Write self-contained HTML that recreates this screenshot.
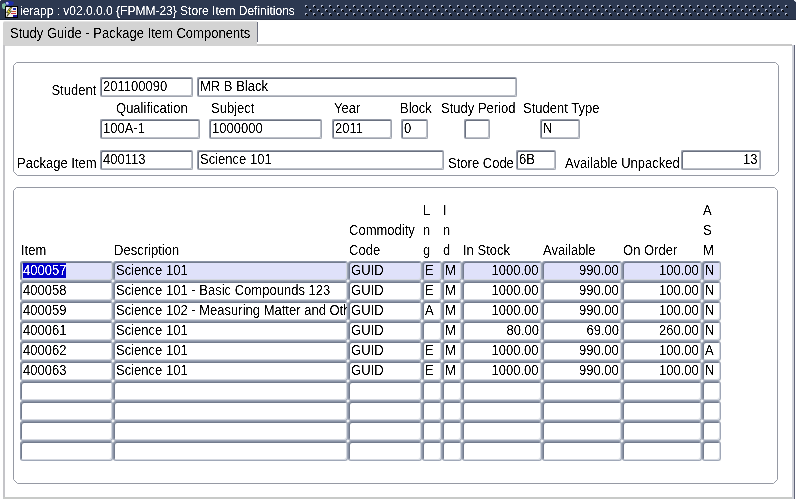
<!DOCTYPE html><html><head><meta charset="utf-8"><style>
*{margin:0;padding:0;box-sizing:border-box}
html,body{width:796px;height:499px;overflow:hidden;background:#fff;font-family:"Liberation Sans", sans-serif}
.t{position:absolute;white-space:pre;line-height:15px;font-size:13px;color:#000;filter:url(#crisp)}
.f{position:absolute;border:1px solid;border-color:#959ba8 #9ea3ae #9ea3ae #959ba8;box-shadow:inset 1px 1px 0 #6a7180,inset -1px -1px 0 #bcc0c8;border-radius:2px;background:#fff;overflow:hidden}
.c{position:absolute;border:1px solid;border-color:#8a93a5 #a0a8b8 #a0a8b8 #8a93a5;box-shadow:inset 1px 1px 0 #737c8e,inset -1px -1px 0 #d4d8e0;border-radius:3px;background:#fff;overflow:hidden;height:20px}
.cur{background:#dfe1fa}
.s{display:inline-block;font-size:14px;line-height:15px;transform:scaleX(0.93);position:relative;top:-0.35px}
</style></head><body>
<svg width="0" height="0" style="position:absolute"><filter id="crisp" color-interpolation-filters="sRGB"><feComponentTransfer><feFuncA type="linear" slope="3" intercept="-1"/></feComponentTransfer></filter></svg>
<div style="position:absolute;left:0;top:0;width:796px;height:19px;background:#2c3850"></div>
<div style="position:absolute;left:0;top:19px;width:796px;height:1px;background:#232c40"></div>
<svg style="position:absolute;left:0;top:0" width="796" height="20" shape-rendering="crispEdges"><rect x="306" y="6" width="2" height="2" fill="#141a28"/><rect x="305" y="5" width="2" height="2" fill="#b4bcd2"/><rect x="306" y="6" width="1" height="1" fill="#000"/><rect x="307" y="7" width="1" height="1" fill="#000"/><rect x="314" y="6" width="2" height="2" fill="#141a28"/><rect x="313" y="5" width="2" height="2" fill="#b4bcd2"/><rect x="314" y="6" width="1" height="1" fill="#000"/><rect x="315" y="7" width="1" height="1" fill="#000"/><rect x="322" y="6" width="2" height="2" fill="#141a28"/><rect x="321" y="5" width="2" height="2" fill="#b4bcd2"/><rect x="322" y="6" width="1" height="1" fill="#000"/><rect x="323" y="7" width="1" height="1" fill="#000"/><rect x="330" y="6" width="2" height="2" fill="#141a28"/><rect x="329" y="5" width="2" height="2" fill="#b4bcd2"/><rect x="330" y="6" width="1" height="1" fill="#000"/><rect x="331" y="7" width="1" height="1" fill="#000"/><rect x="338" y="6" width="2" height="2" fill="#141a28"/><rect x="337" y="5" width="2" height="2" fill="#b4bcd2"/><rect x="338" y="6" width="1" height="1" fill="#000"/><rect x="339" y="7" width="1" height="1" fill="#000"/><rect x="346" y="6" width="2" height="2" fill="#141a28"/><rect x="345" y="5" width="2" height="2" fill="#b4bcd2"/><rect x="346" y="6" width="1" height="1" fill="#000"/><rect x="347" y="7" width="1" height="1" fill="#000"/><rect x="354" y="6" width="2" height="2" fill="#141a28"/><rect x="353" y="5" width="2" height="2" fill="#b4bcd2"/><rect x="354" y="6" width="1" height="1" fill="#000"/><rect x="355" y="7" width="1" height="1" fill="#000"/><rect x="362" y="6" width="2" height="2" fill="#141a28"/><rect x="361" y="5" width="2" height="2" fill="#b4bcd2"/><rect x="362" y="6" width="1" height="1" fill="#000"/><rect x="363" y="7" width="1" height="1" fill="#000"/><rect x="370" y="6" width="2" height="2" fill="#141a28"/><rect x="369" y="5" width="2" height="2" fill="#b4bcd2"/><rect x="370" y="6" width="1" height="1" fill="#000"/><rect x="371" y="7" width="1" height="1" fill="#000"/><rect x="378" y="6" width="2" height="2" fill="#141a28"/><rect x="377" y="5" width="2" height="2" fill="#b4bcd2"/><rect x="378" y="6" width="1" height="1" fill="#000"/><rect x="379" y="7" width="1" height="1" fill="#000"/><rect x="386" y="6" width="2" height="2" fill="#141a28"/><rect x="385" y="5" width="2" height="2" fill="#b4bcd2"/><rect x="386" y="6" width="1" height="1" fill="#000"/><rect x="387" y="7" width="1" height="1" fill="#000"/><rect x="394" y="6" width="2" height="2" fill="#141a28"/><rect x="393" y="5" width="2" height="2" fill="#b4bcd2"/><rect x="394" y="6" width="1" height="1" fill="#000"/><rect x="395" y="7" width="1" height="1" fill="#000"/><rect x="402" y="6" width="2" height="2" fill="#141a28"/><rect x="401" y="5" width="2" height="2" fill="#b4bcd2"/><rect x="402" y="6" width="1" height="1" fill="#000"/><rect x="403" y="7" width="1" height="1" fill="#000"/><rect x="410" y="6" width="2" height="2" fill="#141a28"/><rect x="409" y="5" width="2" height="2" fill="#b4bcd2"/><rect x="410" y="6" width="1" height="1" fill="#000"/><rect x="411" y="7" width="1" height="1" fill="#000"/><rect x="418" y="6" width="2" height="2" fill="#141a28"/><rect x="417" y="5" width="2" height="2" fill="#b4bcd2"/><rect x="418" y="6" width="1" height="1" fill="#000"/><rect x="419" y="7" width="1" height="1" fill="#000"/><rect x="426" y="6" width="2" height="2" fill="#141a28"/><rect x="425" y="5" width="2" height="2" fill="#b4bcd2"/><rect x="426" y="6" width="1" height="1" fill="#000"/><rect x="427" y="7" width="1" height="1" fill="#000"/><rect x="434" y="6" width="2" height="2" fill="#141a28"/><rect x="433" y="5" width="2" height="2" fill="#b4bcd2"/><rect x="434" y="6" width="1" height="1" fill="#000"/><rect x="435" y="7" width="1" height="1" fill="#000"/><rect x="442" y="6" width="2" height="2" fill="#141a28"/><rect x="441" y="5" width="2" height="2" fill="#b4bcd2"/><rect x="442" y="6" width="1" height="1" fill="#000"/><rect x="443" y="7" width="1" height="1" fill="#000"/><rect x="450" y="6" width="2" height="2" fill="#141a28"/><rect x="449" y="5" width="2" height="2" fill="#b4bcd2"/><rect x="450" y="6" width="1" height="1" fill="#000"/><rect x="451" y="7" width="1" height="1" fill="#000"/><rect x="458" y="6" width="2" height="2" fill="#141a28"/><rect x="457" y="5" width="2" height="2" fill="#b4bcd2"/><rect x="458" y="6" width="1" height="1" fill="#000"/><rect x="459" y="7" width="1" height="1" fill="#000"/><rect x="466" y="6" width="2" height="2" fill="#141a28"/><rect x="465" y="5" width="2" height="2" fill="#b4bcd2"/><rect x="466" y="6" width="1" height="1" fill="#000"/><rect x="467" y="7" width="1" height="1" fill="#000"/><rect x="474" y="6" width="2" height="2" fill="#141a28"/><rect x="473" y="5" width="2" height="2" fill="#b4bcd2"/><rect x="474" y="6" width="1" height="1" fill="#000"/><rect x="475" y="7" width="1" height="1" fill="#000"/><rect x="482" y="6" width="2" height="2" fill="#141a28"/><rect x="481" y="5" width="2" height="2" fill="#b4bcd2"/><rect x="482" y="6" width="1" height="1" fill="#000"/><rect x="483" y="7" width="1" height="1" fill="#000"/><rect x="490" y="6" width="2" height="2" fill="#141a28"/><rect x="489" y="5" width="2" height="2" fill="#b4bcd2"/><rect x="490" y="6" width="1" height="1" fill="#000"/><rect x="491" y="7" width="1" height="1" fill="#000"/><rect x="498" y="6" width="2" height="2" fill="#141a28"/><rect x="497" y="5" width="2" height="2" fill="#b4bcd2"/><rect x="498" y="6" width="1" height="1" fill="#000"/><rect x="499" y="7" width="1" height="1" fill="#000"/><rect x="506" y="6" width="2" height="2" fill="#141a28"/><rect x="505" y="5" width="2" height="2" fill="#b4bcd2"/><rect x="506" y="6" width="1" height="1" fill="#000"/><rect x="507" y="7" width="1" height="1" fill="#000"/><rect x="514" y="6" width="2" height="2" fill="#141a28"/><rect x="513" y="5" width="2" height="2" fill="#b4bcd2"/><rect x="514" y="6" width="1" height="1" fill="#000"/><rect x="515" y="7" width="1" height="1" fill="#000"/><rect x="522" y="6" width="2" height="2" fill="#141a28"/><rect x="521" y="5" width="2" height="2" fill="#b4bcd2"/><rect x="522" y="6" width="1" height="1" fill="#000"/><rect x="523" y="7" width="1" height="1" fill="#000"/><rect x="530" y="6" width="2" height="2" fill="#141a28"/><rect x="529" y="5" width="2" height="2" fill="#b4bcd2"/><rect x="530" y="6" width="1" height="1" fill="#000"/><rect x="531" y="7" width="1" height="1" fill="#000"/><rect x="538" y="6" width="2" height="2" fill="#141a28"/><rect x="537" y="5" width="2" height="2" fill="#b4bcd2"/><rect x="538" y="6" width="1" height="1" fill="#000"/><rect x="539" y="7" width="1" height="1" fill="#000"/><rect x="546" y="6" width="2" height="2" fill="#141a28"/><rect x="545" y="5" width="2" height="2" fill="#b4bcd2"/><rect x="546" y="6" width="1" height="1" fill="#000"/><rect x="547" y="7" width="1" height="1" fill="#000"/><rect x="554" y="6" width="2" height="2" fill="#141a28"/><rect x="553" y="5" width="2" height="2" fill="#b4bcd2"/><rect x="554" y="6" width="1" height="1" fill="#000"/><rect x="555" y="7" width="1" height="1" fill="#000"/><rect x="562" y="6" width="2" height="2" fill="#141a28"/><rect x="561" y="5" width="2" height="2" fill="#b4bcd2"/><rect x="562" y="6" width="1" height="1" fill="#000"/><rect x="563" y="7" width="1" height="1" fill="#000"/><rect x="570" y="6" width="2" height="2" fill="#141a28"/><rect x="569" y="5" width="2" height="2" fill="#b4bcd2"/><rect x="570" y="6" width="1" height="1" fill="#000"/><rect x="571" y="7" width="1" height="1" fill="#000"/><rect x="578" y="6" width="2" height="2" fill="#141a28"/><rect x="577" y="5" width="2" height="2" fill="#b4bcd2"/><rect x="578" y="6" width="1" height="1" fill="#000"/><rect x="579" y="7" width="1" height="1" fill="#000"/><rect x="586" y="6" width="2" height="2" fill="#141a28"/><rect x="585" y="5" width="2" height="2" fill="#b4bcd2"/><rect x="586" y="6" width="1" height="1" fill="#000"/><rect x="587" y="7" width="1" height="1" fill="#000"/><rect x="594" y="6" width="2" height="2" fill="#141a28"/><rect x="593" y="5" width="2" height="2" fill="#b4bcd2"/><rect x="594" y="6" width="1" height="1" fill="#000"/><rect x="595" y="7" width="1" height="1" fill="#000"/><rect x="602" y="6" width="2" height="2" fill="#141a28"/><rect x="601" y="5" width="2" height="2" fill="#b4bcd2"/><rect x="602" y="6" width="1" height="1" fill="#000"/><rect x="603" y="7" width="1" height="1" fill="#000"/><rect x="610" y="6" width="2" height="2" fill="#141a28"/><rect x="609" y="5" width="2" height="2" fill="#b4bcd2"/><rect x="610" y="6" width="1" height="1" fill="#000"/><rect x="611" y="7" width="1" height="1" fill="#000"/><rect x="618" y="6" width="2" height="2" fill="#141a28"/><rect x="617" y="5" width="2" height="2" fill="#b4bcd2"/><rect x="618" y="6" width="1" height="1" fill="#000"/><rect x="619" y="7" width="1" height="1" fill="#000"/><rect x="626" y="6" width="2" height="2" fill="#141a28"/><rect x="625" y="5" width="2" height="2" fill="#b4bcd2"/><rect x="626" y="6" width="1" height="1" fill="#000"/><rect x="627" y="7" width="1" height="1" fill="#000"/><rect x="634" y="6" width="2" height="2" fill="#141a28"/><rect x="633" y="5" width="2" height="2" fill="#b4bcd2"/><rect x="634" y="6" width="1" height="1" fill="#000"/><rect x="635" y="7" width="1" height="1" fill="#000"/><rect x="642" y="6" width="2" height="2" fill="#141a28"/><rect x="641" y="5" width="2" height="2" fill="#b4bcd2"/><rect x="642" y="6" width="1" height="1" fill="#000"/><rect x="643" y="7" width="1" height="1" fill="#000"/><rect x="650" y="6" width="2" height="2" fill="#141a28"/><rect x="649" y="5" width="2" height="2" fill="#b4bcd2"/><rect x="650" y="6" width="1" height="1" fill="#000"/><rect x="651" y="7" width="1" height="1" fill="#000"/><rect x="658" y="6" width="2" height="2" fill="#141a28"/><rect x="657" y="5" width="2" height="2" fill="#b4bcd2"/><rect x="658" y="6" width="1" height="1" fill="#000"/><rect x="659" y="7" width="1" height="1" fill="#000"/><rect x="666" y="6" width="2" height="2" fill="#141a28"/><rect x="665" y="5" width="2" height="2" fill="#b4bcd2"/><rect x="666" y="6" width="1" height="1" fill="#000"/><rect x="667" y="7" width="1" height="1" fill="#000"/><rect x="674" y="6" width="2" height="2" fill="#141a28"/><rect x="673" y="5" width="2" height="2" fill="#b4bcd2"/><rect x="674" y="6" width="1" height="1" fill="#000"/><rect x="675" y="7" width="1" height="1" fill="#000"/><rect x="682" y="6" width="2" height="2" fill="#141a28"/><rect x="681" y="5" width="2" height="2" fill="#b4bcd2"/><rect x="682" y="6" width="1" height="1" fill="#000"/><rect x="683" y="7" width="1" height="1" fill="#000"/><rect x="690" y="6" width="2" height="2" fill="#141a28"/><rect x="689" y="5" width="2" height="2" fill="#b4bcd2"/><rect x="690" y="6" width="1" height="1" fill="#000"/><rect x="691" y="7" width="1" height="1" fill="#000"/><rect x="698" y="6" width="2" height="2" fill="#141a28"/><rect x="697" y="5" width="2" height="2" fill="#b4bcd2"/><rect x="698" y="6" width="1" height="1" fill="#000"/><rect x="699" y="7" width="1" height="1" fill="#000"/><rect x="706" y="6" width="2" height="2" fill="#141a28"/><rect x="705" y="5" width="2" height="2" fill="#b4bcd2"/><rect x="706" y="6" width="1" height="1" fill="#000"/><rect x="707" y="7" width="1" height="1" fill="#000"/><rect x="714" y="6" width="2" height="2" fill="#141a28"/><rect x="713" y="5" width="2" height="2" fill="#b4bcd2"/><rect x="714" y="6" width="1" height="1" fill="#000"/><rect x="715" y="7" width="1" height="1" fill="#000"/><rect x="722" y="6" width="2" height="2" fill="#141a28"/><rect x="721" y="5" width="2" height="2" fill="#b4bcd2"/><rect x="722" y="6" width="1" height="1" fill="#000"/><rect x="723" y="7" width="1" height="1" fill="#000"/><rect x="730" y="6" width="2" height="2" fill="#141a28"/><rect x="729" y="5" width="2" height="2" fill="#b4bcd2"/><rect x="730" y="6" width="1" height="1" fill="#000"/><rect x="731" y="7" width="1" height="1" fill="#000"/><rect x="738" y="6" width="2" height="2" fill="#141a28"/><rect x="737" y="5" width="2" height="2" fill="#b4bcd2"/><rect x="738" y="6" width="1" height="1" fill="#000"/><rect x="739" y="7" width="1" height="1" fill="#000"/><rect x="746" y="6" width="2" height="2" fill="#141a28"/><rect x="745" y="5" width="2" height="2" fill="#b4bcd2"/><rect x="746" y="6" width="1" height="1" fill="#000"/><rect x="747" y="7" width="1" height="1" fill="#000"/><rect x="754" y="6" width="2" height="2" fill="#141a28"/><rect x="753" y="5" width="2" height="2" fill="#b4bcd2"/><rect x="754" y="6" width="1" height="1" fill="#000"/><rect x="755" y="7" width="1" height="1" fill="#000"/><rect x="762" y="6" width="2" height="2" fill="#141a28"/><rect x="761" y="5" width="2" height="2" fill="#b4bcd2"/><rect x="762" y="6" width="1" height="1" fill="#000"/><rect x="763" y="7" width="1" height="1" fill="#000"/><rect x="770" y="6" width="2" height="2" fill="#141a28"/><rect x="769" y="5" width="2" height="2" fill="#b4bcd2"/><rect x="770" y="6" width="1" height="1" fill="#000"/><rect x="771" y="7" width="1" height="1" fill="#000"/><rect x="778" y="6" width="2" height="2" fill="#141a28"/><rect x="777" y="5" width="2" height="2" fill="#b4bcd2"/><rect x="778" y="6" width="1" height="1" fill="#000"/><rect x="779" y="7" width="1" height="1" fill="#000"/><rect x="786" y="6" width="2" height="2" fill="#141a28"/><rect x="785" y="5" width="2" height="2" fill="#b4bcd2"/><rect x="786" y="6" width="1" height="1" fill="#000"/><rect x="787" y="7" width="1" height="1" fill="#000"/><rect x="310" y="10" width="2" height="2" fill="#141a28"/><rect x="309" y="9" width="2" height="2" fill="#b4bcd2"/><rect x="310" y="10" width="1" height="1" fill="#000"/><rect x="311" y="11" width="1" height="1" fill="#000"/><rect x="318" y="10" width="2" height="2" fill="#141a28"/><rect x="317" y="9" width="2" height="2" fill="#b4bcd2"/><rect x="318" y="10" width="1" height="1" fill="#000"/><rect x="319" y="11" width="1" height="1" fill="#000"/><rect x="326" y="10" width="2" height="2" fill="#141a28"/><rect x="325" y="9" width="2" height="2" fill="#b4bcd2"/><rect x="326" y="10" width="1" height="1" fill="#000"/><rect x="327" y="11" width="1" height="1" fill="#000"/><rect x="334" y="10" width="2" height="2" fill="#141a28"/><rect x="333" y="9" width="2" height="2" fill="#b4bcd2"/><rect x="334" y="10" width="1" height="1" fill="#000"/><rect x="335" y="11" width="1" height="1" fill="#000"/><rect x="342" y="10" width="2" height="2" fill="#141a28"/><rect x="341" y="9" width="2" height="2" fill="#b4bcd2"/><rect x="342" y="10" width="1" height="1" fill="#000"/><rect x="343" y="11" width="1" height="1" fill="#000"/><rect x="350" y="10" width="2" height="2" fill="#141a28"/><rect x="349" y="9" width="2" height="2" fill="#b4bcd2"/><rect x="350" y="10" width="1" height="1" fill="#000"/><rect x="351" y="11" width="1" height="1" fill="#000"/><rect x="358" y="10" width="2" height="2" fill="#141a28"/><rect x="357" y="9" width="2" height="2" fill="#b4bcd2"/><rect x="358" y="10" width="1" height="1" fill="#000"/><rect x="359" y="11" width="1" height="1" fill="#000"/><rect x="366" y="10" width="2" height="2" fill="#141a28"/><rect x="365" y="9" width="2" height="2" fill="#b4bcd2"/><rect x="366" y="10" width="1" height="1" fill="#000"/><rect x="367" y="11" width="1" height="1" fill="#000"/><rect x="374" y="10" width="2" height="2" fill="#141a28"/><rect x="373" y="9" width="2" height="2" fill="#b4bcd2"/><rect x="374" y="10" width="1" height="1" fill="#000"/><rect x="375" y="11" width="1" height="1" fill="#000"/><rect x="382" y="10" width="2" height="2" fill="#141a28"/><rect x="381" y="9" width="2" height="2" fill="#b4bcd2"/><rect x="382" y="10" width="1" height="1" fill="#000"/><rect x="383" y="11" width="1" height="1" fill="#000"/><rect x="390" y="10" width="2" height="2" fill="#141a28"/><rect x="389" y="9" width="2" height="2" fill="#b4bcd2"/><rect x="390" y="10" width="1" height="1" fill="#000"/><rect x="391" y="11" width="1" height="1" fill="#000"/><rect x="398" y="10" width="2" height="2" fill="#141a28"/><rect x="397" y="9" width="2" height="2" fill="#b4bcd2"/><rect x="398" y="10" width="1" height="1" fill="#000"/><rect x="399" y="11" width="1" height="1" fill="#000"/><rect x="406" y="10" width="2" height="2" fill="#141a28"/><rect x="405" y="9" width="2" height="2" fill="#b4bcd2"/><rect x="406" y="10" width="1" height="1" fill="#000"/><rect x="407" y="11" width="1" height="1" fill="#000"/><rect x="414" y="10" width="2" height="2" fill="#141a28"/><rect x="413" y="9" width="2" height="2" fill="#b4bcd2"/><rect x="414" y="10" width="1" height="1" fill="#000"/><rect x="415" y="11" width="1" height="1" fill="#000"/><rect x="422" y="10" width="2" height="2" fill="#141a28"/><rect x="421" y="9" width="2" height="2" fill="#b4bcd2"/><rect x="422" y="10" width="1" height="1" fill="#000"/><rect x="423" y="11" width="1" height="1" fill="#000"/><rect x="430" y="10" width="2" height="2" fill="#141a28"/><rect x="429" y="9" width="2" height="2" fill="#b4bcd2"/><rect x="430" y="10" width="1" height="1" fill="#000"/><rect x="431" y="11" width="1" height="1" fill="#000"/><rect x="438" y="10" width="2" height="2" fill="#141a28"/><rect x="437" y="9" width="2" height="2" fill="#b4bcd2"/><rect x="438" y="10" width="1" height="1" fill="#000"/><rect x="439" y="11" width="1" height="1" fill="#000"/><rect x="446" y="10" width="2" height="2" fill="#141a28"/><rect x="445" y="9" width="2" height="2" fill="#b4bcd2"/><rect x="446" y="10" width="1" height="1" fill="#000"/><rect x="447" y="11" width="1" height="1" fill="#000"/><rect x="454" y="10" width="2" height="2" fill="#141a28"/><rect x="453" y="9" width="2" height="2" fill="#b4bcd2"/><rect x="454" y="10" width="1" height="1" fill="#000"/><rect x="455" y="11" width="1" height="1" fill="#000"/><rect x="462" y="10" width="2" height="2" fill="#141a28"/><rect x="461" y="9" width="2" height="2" fill="#b4bcd2"/><rect x="462" y="10" width="1" height="1" fill="#000"/><rect x="463" y="11" width="1" height="1" fill="#000"/><rect x="470" y="10" width="2" height="2" fill="#141a28"/><rect x="469" y="9" width="2" height="2" fill="#b4bcd2"/><rect x="470" y="10" width="1" height="1" fill="#000"/><rect x="471" y="11" width="1" height="1" fill="#000"/><rect x="478" y="10" width="2" height="2" fill="#141a28"/><rect x="477" y="9" width="2" height="2" fill="#b4bcd2"/><rect x="478" y="10" width="1" height="1" fill="#000"/><rect x="479" y="11" width="1" height="1" fill="#000"/><rect x="486" y="10" width="2" height="2" fill="#141a28"/><rect x="485" y="9" width="2" height="2" fill="#b4bcd2"/><rect x="486" y="10" width="1" height="1" fill="#000"/><rect x="487" y="11" width="1" height="1" fill="#000"/><rect x="494" y="10" width="2" height="2" fill="#141a28"/><rect x="493" y="9" width="2" height="2" fill="#b4bcd2"/><rect x="494" y="10" width="1" height="1" fill="#000"/><rect x="495" y="11" width="1" height="1" fill="#000"/><rect x="502" y="10" width="2" height="2" fill="#141a28"/><rect x="501" y="9" width="2" height="2" fill="#b4bcd2"/><rect x="502" y="10" width="1" height="1" fill="#000"/><rect x="503" y="11" width="1" height="1" fill="#000"/><rect x="510" y="10" width="2" height="2" fill="#141a28"/><rect x="509" y="9" width="2" height="2" fill="#b4bcd2"/><rect x="510" y="10" width="1" height="1" fill="#000"/><rect x="511" y="11" width="1" height="1" fill="#000"/><rect x="518" y="10" width="2" height="2" fill="#141a28"/><rect x="517" y="9" width="2" height="2" fill="#b4bcd2"/><rect x="518" y="10" width="1" height="1" fill="#000"/><rect x="519" y="11" width="1" height="1" fill="#000"/><rect x="526" y="10" width="2" height="2" fill="#141a28"/><rect x="525" y="9" width="2" height="2" fill="#b4bcd2"/><rect x="526" y="10" width="1" height="1" fill="#000"/><rect x="527" y="11" width="1" height="1" fill="#000"/><rect x="534" y="10" width="2" height="2" fill="#141a28"/><rect x="533" y="9" width="2" height="2" fill="#b4bcd2"/><rect x="534" y="10" width="1" height="1" fill="#000"/><rect x="535" y="11" width="1" height="1" fill="#000"/><rect x="542" y="10" width="2" height="2" fill="#141a28"/><rect x="541" y="9" width="2" height="2" fill="#b4bcd2"/><rect x="542" y="10" width="1" height="1" fill="#000"/><rect x="543" y="11" width="1" height="1" fill="#000"/><rect x="550" y="10" width="2" height="2" fill="#141a28"/><rect x="549" y="9" width="2" height="2" fill="#b4bcd2"/><rect x="550" y="10" width="1" height="1" fill="#000"/><rect x="551" y="11" width="1" height="1" fill="#000"/><rect x="558" y="10" width="2" height="2" fill="#141a28"/><rect x="557" y="9" width="2" height="2" fill="#b4bcd2"/><rect x="558" y="10" width="1" height="1" fill="#000"/><rect x="559" y="11" width="1" height="1" fill="#000"/><rect x="566" y="10" width="2" height="2" fill="#141a28"/><rect x="565" y="9" width="2" height="2" fill="#b4bcd2"/><rect x="566" y="10" width="1" height="1" fill="#000"/><rect x="567" y="11" width="1" height="1" fill="#000"/><rect x="574" y="10" width="2" height="2" fill="#141a28"/><rect x="573" y="9" width="2" height="2" fill="#b4bcd2"/><rect x="574" y="10" width="1" height="1" fill="#000"/><rect x="575" y="11" width="1" height="1" fill="#000"/><rect x="582" y="10" width="2" height="2" fill="#141a28"/><rect x="581" y="9" width="2" height="2" fill="#b4bcd2"/><rect x="582" y="10" width="1" height="1" fill="#000"/><rect x="583" y="11" width="1" height="1" fill="#000"/><rect x="590" y="10" width="2" height="2" fill="#141a28"/><rect x="589" y="9" width="2" height="2" fill="#b4bcd2"/><rect x="590" y="10" width="1" height="1" fill="#000"/><rect x="591" y="11" width="1" height="1" fill="#000"/><rect x="598" y="10" width="2" height="2" fill="#141a28"/><rect x="597" y="9" width="2" height="2" fill="#b4bcd2"/><rect x="598" y="10" width="1" height="1" fill="#000"/><rect x="599" y="11" width="1" height="1" fill="#000"/><rect x="606" y="10" width="2" height="2" fill="#141a28"/><rect x="605" y="9" width="2" height="2" fill="#b4bcd2"/><rect x="606" y="10" width="1" height="1" fill="#000"/><rect x="607" y="11" width="1" height="1" fill="#000"/><rect x="614" y="10" width="2" height="2" fill="#141a28"/><rect x="613" y="9" width="2" height="2" fill="#b4bcd2"/><rect x="614" y="10" width="1" height="1" fill="#000"/><rect x="615" y="11" width="1" height="1" fill="#000"/><rect x="622" y="10" width="2" height="2" fill="#141a28"/><rect x="621" y="9" width="2" height="2" fill="#b4bcd2"/><rect x="622" y="10" width="1" height="1" fill="#000"/><rect x="623" y="11" width="1" height="1" fill="#000"/><rect x="630" y="10" width="2" height="2" fill="#141a28"/><rect x="629" y="9" width="2" height="2" fill="#b4bcd2"/><rect x="630" y="10" width="1" height="1" fill="#000"/><rect x="631" y="11" width="1" height="1" fill="#000"/><rect x="638" y="10" width="2" height="2" fill="#141a28"/><rect x="637" y="9" width="2" height="2" fill="#b4bcd2"/><rect x="638" y="10" width="1" height="1" fill="#000"/><rect x="639" y="11" width="1" height="1" fill="#000"/><rect x="646" y="10" width="2" height="2" fill="#141a28"/><rect x="645" y="9" width="2" height="2" fill="#b4bcd2"/><rect x="646" y="10" width="1" height="1" fill="#000"/><rect x="647" y="11" width="1" height="1" fill="#000"/><rect x="654" y="10" width="2" height="2" fill="#141a28"/><rect x="653" y="9" width="2" height="2" fill="#b4bcd2"/><rect x="654" y="10" width="1" height="1" fill="#000"/><rect x="655" y="11" width="1" height="1" fill="#000"/><rect x="662" y="10" width="2" height="2" fill="#141a28"/><rect x="661" y="9" width="2" height="2" fill="#b4bcd2"/><rect x="662" y="10" width="1" height="1" fill="#000"/><rect x="663" y="11" width="1" height="1" fill="#000"/><rect x="670" y="10" width="2" height="2" fill="#141a28"/><rect x="669" y="9" width="2" height="2" fill="#b4bcd2"/><rect x="670" y="10" width="1" height="1" fill="#000"/><rect x="671" y="11" width="1" height="1" fill="#000"/><rect x="678" y="10" width="2" height="2" fill="#141a28"/><rect x="677" y="9" width="2" height="2" fill="#b4bcd2"/><rect x="678" y="10" width="1" height="1" fill="#000"/><rect x="679" y="11" width="1" height="1" fill="#000"/><rect x="686" y="10" width="2" height="2" fill="#141a28"/><rect x="685" y="9" width="2" height="2" fill="#b4bcd2"/><rect x="686" y="10" width="1" height="1" fill="#000"/><rect x="687" y="11" width="1" height="1" fill="#000"/><rect x="694" y="10" width="2" height="2" fill="#141a28"/><rect x="693" y="9" width="2" height="2" fill="#b4bcd2"/><rect x="694" y="10" width="1" height="1" fill="#000"/><rect x="695" y="11" width="1" height="1" fill="#000"/><rect x="702" y="10" width="2" height="2" fill="#141a28"/><rect x="701" y="9" width="2" height="2" fill="#b4bcd2"/><rect x="702" y="10" width="1" height="1" fill="#000"/><rect x="703" y="11" width="1" height="1" fill="#000"/><rect x="710" y="10" width="2" height="2" fill="#141a28"/><rect x="709" y="9" width="2" height="2" fill="#b4bcd2"/><rect x="710" y="10" width="1" height="1" fill="#000"/><rect x="711" y="11" width="1" height="1" fill="#000"/><rect x="718" y="10" width="2" height="2" fill="#141a28"/><rect x="717" y="9" width="2" height="2" fill="#b4bcd2"/><rect x="718" y="10" width="1" height="1" fill="#000"/><rect x="719" y="11" width="1" height="1" fill="#000"/><rect x="726" y="10" width="2" height="2" fill="#141a28"/><rect x="725" y="9" width="2" height="2" fill="#b4bcd2"/><rect x="726" y="10" width="1" height="1" fill="#000"/><rect x="727" y="11" width="1" height="1" fill="#000"/><rect x="734" y="10" width="2" height="2" fill="#141a28"/><rect x="733" y="9" width="2" height="2" fill="#b4bcd2"/><rect x="734" y="10" width="1" height="1" fill="#000"/><rect x="735" y="11" width="1" height="1" fill="#000"/><rect x="742" y="10" width="2" height="2" fill="#141a28"/><rect x="741" y="9" width="2" height="2" fill="#b4bcd2"/><rect x="742" y="10" width="1" height="1" fill="#000"/><rect x="743" y="11" width="1" height="1" fill="#000"/><rect x="750" y="10" width="2" height="2" fill="#141a28"/><rect x="749" y="9" width="2" height="2" fill="#b4bcd2"/><rect x="750" y="10" width="1" height="1" fill="#000"/><rect x="751" y="11" width="1" height="1" fill="#000"/><rect x="758" y="10" width="2" height="2" fill="#141a28"/><rect x="757" y="9" width="2" height="2" fill="#b4bcd2"/><rect x="758" y="10" width="1" height="1" fill="#000"/><rect x="759" y="11" width="1" height="1" fill="#000"/><rect x="766" y="10" width="2" height="2" fill="#141a28"/><rect x="765" y="9" width="2" height="2" fill="#b4bcd2"/><rect x="766" y="10" width="1" height="1" fill="#000"/><rect x="767" y="11" width="1" height="1" fill="#000"/><rect x="774" y="10" width="2" height="2" fill="#141a28"/><rect x="773" y="9" width="2" height="2" fill="#b4bcd2"/><rect x="774" y="10" width="1" height="1" fill="#000"/><rect x="775" y="11" width="1" height="1" fill="#000"/><rect x="782" y="10" width="2" height="2" fill="#141a28"/><rect x="781" y="9" width="2" height="2" fill="#b4bcd2"/><rect x="782" y="10" width="1" height="1" fill="#000"/><rect x="783" y="11" width="1" height="1" fill="#000"/><rect x="306" y="14" width="2" height="2" fill="#141a28"/><rect x="305" y="13" width="2" height="2" fill="#b4bcd2"/><rect x="306" y="14" width="1" height="1" fill="#000"/><rect x="307" y="15" width="1" height="1" fill="#000"/><rect x="314" y="14" width="2" height="2" fill="#141a28"/><rect x="313" y="13" width="2" height="2" fill="#b4bcd2"/><rect x="314" y="14" width="1" height="1" fill="#000"/><rect x="315" y="15" width="1" height="1" fill="#000"/><rect x="322" y="14" width="2" height="2" fill="#141a28"/><rect x="321" y="13" width="2" height="2" fill="#b4bcd2"/><rect x="322" y="14" width="1" height="1" fill="#000"/><rect x="323" y="15" width="1" height="1" fill="#000"/><rect x="330" y="14" width="2" height="2" fill="#141a28"/><rect x="329" y="13" width="2" height="2" fill="#b4bcd2"/><rect x="330" y="14" width="1" height="1" fill="#000"/><rect x="331" y="15" width="1" height="1" fill="#000"/><rect x="338" y="14" width="2" height="2" fill="#141a28"/><rect x="337" y="13" width="2" height="2" fill="#b4bcd2"/><rect x="338" y="14" width="1" height="1" fill="#000"/><rect x="339" y="15" width="1" height="1" fill="#000"/><rect x="346" y="14" width="2" height="2" fill="#141a28"/><rect x="345" y="13" width="2" height="2" fill="#b4bcd2"/><rect x="346" y="14" width="1" height="1" fill="#000"/><rect x="347" y="15" width="1" height="1" fill="#000"/><rect x="354" y="14" width="2" height="2" fill="#141a28"/><rect x="353" y="13" width="2" height="2" fill="#b4bcd2"/><rect x="354" y="14" width="1" height="1" fill="#000"/><rect x="355" y="15" width="1" height="1" fill="#000"/><rect x="362" y="14" width="2" height="2" fill="#141a28"/><rect x="361" y="13" width="2" height="2" fill="#b4bcd2"/><rect x="362" y="14" width="1" height="1" fill="#000"/><rect x="363" y="15" width="1" height="1" fill="#000"/><rect x="370" y="14" width="2" height="2" fill="#141a28"/><rect x="369" y="13" width="2" height="2" fill="#b4bcd2"/><rect x="370" y="14" width="1" height="1" fill="#000"/><rect x="371" y="15" width="1" height="1" fill="#000"/><rect x="378" y="14" width="2" height="2" fill="#141a28"/><rect x="377" y="13" width="2" height="2" fill="#b4bcd2"/><rect x="378" y="14" width="1" height="1" fill="#000"/><rect x="379" y="15" width="1" height="1" fill="#000"/><rect x="386" y="14" width="2" height="2" fill="#141a28"/><rect x="385" y="13" width="2" height="2" fill="#b4bcd2"/><rect x="386" y="14" width="1" height="1" fill="#000"/><rect x="387" y="15" width="1" height="1" fill="#000"/><rect x="394" y="14" width="2" height="2" fill="#141a28"/><rect x="393" y="13" width="2" height="2" fill="#b4bcd2"/><rect x="394" y="14" width="1" height="1" fill="#000"/><rect x="395" y="15" width="1" height="1" fill="#000"/><rect x="402" y="14" width="2" height="2" fill="#141a28"/><rect x="401" y="13" width="2" height="2" fill="#b4bcd2"/><rect x="402" y="14" width="1" height="1" fill="#000"/><rect x="403" y="15" width="1" height="1" fill="#000"/><rect x="410" y="14" width="2" height="2" fill="#141a28"/><rect x="409" y="13" width="2" height="2" fill="#b4bcd2"/><rect x="410" y="14" width="1" height="1" fill="#000"/><rect x="411" y="15" width="1" height="1" fill="#000"/><rect x="418" y="14" width="2" height="2" fill="#141a28"/><rect x="417" y="13" width="2" height="2" fill="#b4bcd2"/><rect x="418" y="14" width="1" height="1" fill="#000"/><rect x="419" y="15" width="1" height="1" fill="#000"/><rect x="426" y="14" width="2" height="2" fill="#141a28"/><rect x="425" y="13" width="2" height="2" fill="#b4bcd2"/><rect x="426" y="14" width="1" height="1" fill="#000"/><rect x="427" y="15" width="1" height="1" fill="#000"/><rect x="434" y="14" width="2" height="2" fill="#141a28"/><rect x="433" y="13" width="2" height="2" fill="#b4bcd2"/><rect x="434" y="14" width="1" height="1" fill="#000"/><rect x="435" y="15" width="1" height="1" fill="#000"/><rect x="442" y="14" width="2" height="2" fill="#141a28"/><rect x="441" y="13" width="2" height="2" fill="#b4bcd2"/><rect x="442" y="14" width="1" height="1" fill="#000"/><rect x="443" y="15" width="1" height="1" fill="#000"/><rect x="450" y="14" width="2" height="2" fill="#141a28"/><rect x="449" y="13" width="2" height="2" fill="#b4bcd2"/><rect x="450" y="14" width="1" height="1" fill="#000"/><rect x="451" y="15" width="1" height="1" fill="#000"/><rect x="458" y="14" width="2" height="2" fill="#141a28"/><rect x="457" y="13" width="2" height="2" fill="#b4bcd2"/><rect x="458" y="14" width="1" height="1" fill="#000"/><rect x="459" y="15" width="1" height="1" fill="#000"/><rect x="466" y="14" width="2" height="2" fill="#141a28"/><rect x="465" y="13" width="2" height="2" fill="#b4bcd2"/><rect x="466" y="14" width="1" height="1" fill="#000"/><rect x="467" y="15" width="1" height="1" fill="#000"/><rect x="474" y="14" width="2" height="2" fill="#141a28"/><rect x="473" y="13" width="2" height="2" fill="#b4bcd2"/><rect x="474" y="14" width="1" height="1" fill="#000"/><rect x="475" y="15" width="1" height="1" fill="#000"/><rect x="482" y="14" width="2" height="2" fill="#141a28"/><rect x="481" y="13" width="2" height="2" fill="#b4bcd2"/><rect x="482" y="14" width="1" height="1" fill="#000"/><rect x="483" y="15" width="1" height="1" fill="#000"/><rect x="490" y="14" width="2" height="2" fill="#141a28"/><rect x="489" y="13" width="2" height="2" fill="#b4bcd2"/><rect x="490" y="14" width="1" height="1" fill="#000"/><rect x="491" y="15" width="1" height="1" fill="#000"/><rect x="498" y="14" width="2" height="2" fill="#141a28"/><rect x="497" y="13" width="2" height="2" fill="#b4bcd2"/><rect x="498" y="14" width="1" height="1" fill="#000"/><rect x="499" y="15" width="1" height="1" fill="#000"/><rect x="506" y="14" width="2" height="2" fill="#141a28"/><rect x="505" y="13" width="2" height="2" fill="#b4bcd2"/><rect x="506" y="14" width="1" height="1" fill="#000"/><rect x="507" y="15" width="1" height="1" fill="#000"/><rect x="514" y="14" width="2" height="2" fill="#141a28"/><rect x="513" y="13" width="2" height="2" fill="#b4bcd2"/><rect x="514" y="14" width="1" height="1" fill="#000"/><rect x="515" y="15" width="1" height="1" fill="#000"/><rect x="522" y="14" width="2" height="2" fill="#141a28"/><rect x="521" y="13" width="2" height="2" fill="#b4bcd2"/><rect x="522" y="14" width="1" height="1" fill="#000"/><rect x="523" y="15" width="1" height="1" fill="#000"/><rect x="530" y="14" width="2" height="2" fill="#141a28"/><rect x="529" y="13" width="2" height="2" fill="#b4bcd2"/><rect x="530" y="14" width="1" height="1" fill="#000"/><rect x="531" y="15" width="1" height="1" fill="#000"/><rect x="538" y="14" width="2" height="2" fill="#141a28"/><rect x="537" y="13" width="2" height="2" fill="#b4bcd2"/><rect x="538" y="14" width="1" height="1" fill="#000"/><rect x="539" y="15" width="1" height="1" fill="#000"/><rect x="546" y="14" width="2" height="2" fill="#141a28"/><rect x="545" y="13" width="2" height="2" fill="#b4bcd2"/><rect x="546" y="14" width="1" height="1" fill="#000"/><rect x="547" y="15" width="1" height="1" fill="#000"/><rect x="554" y="14" width="2" height="2" fill="#141a28"/><rect x="553" y="13" width="2" height="2" fill="#b4bcd2"/><rect x="554" y="14" width="1" height="1" fill="#000"/><rect x="555" y="15" width="1" height="1" fill="#000"/><rect x="562" y="14" width="2" height="2" fill="#141a28"/><rect x="561" y="13" width="2" height="2" fill="#b4bcd2"/><rect x="562" y="14" width="1" height="1" fill="#000"/><rect x="563" y="15" width="1" height="1" fill="#000"/><rect x="570" y="14" width="2" height="2" fill="#141a28"/><rect x="569" y="13" width="2" height="2" fill="#b4bcd2"/><rect x="570" y="14" width="1" height="1" fill="#000"/><rect x="571" y="15" width="1" height="1" fill="#000"/><rect x="578" y="14" width="2" height="2" fill="#141a28"/><rect x="577" y="13" width="2" height="2" fill="#b4bcd2"/><rect x="578" y="14" width="1" height="1" fill="#000"/><rect x="579" y="15" width="1" height="1" fill="#000"/><rect x="586" y="14" width="2" height="2" fill="#141a28"/><rect x="585" y="13" width="2" height="2" fill="#b4bcd2"/><rect x="586" y="14" width="1" height="1" fill="#000"/><rect x="587" y="15" width="1" height="1" fill="#000"/><rect x="594" y="14" width="2" height="2" fill="#141a28"/><rect x="593" y="13" width="2" height="2" fill="#b4bcd2"/><rect x="594" y="14" width="1" height="1" fill="#000"/><rect x="595" y="15" width="1" height="1" fill="#000"/><rect x="602" y="14" width="2" height="2" fill="#141a28"/><rect x="601" y="13" width="2" height="2" fill="#b4bcd2"/><rect x="602" y="14" width="1" height="1" fill="#000"/><rect x="603" y="15" width="1" height="1" fill="#000"/><rect x="610" y="14" width="2" height="2" fill="#141a28"/><rect x="609" y="13" width="2" height="2" fill="#b4bcd2"/><rect x="610" y="14" width="1" height="1" fill="#000"/><rect x="611" y="15" width="1" height="1" fill="#000"/><rect x="618" y="14" width="2" height="2" fill="#141a28"/><rect x="617" y="13" width="2" height="2" fill="#b4bcd2"/><rect x="618" y="14" width="1" height="1" fill="#000"/><rect x="619" y="15" width="1" height="1" fill="#000"/><rect x="626" y="14" width="2" height="2" fill="#141a28"/><rect x="625" y="13" width="2" height="2" fill="#b4bcd2"/><rect x="626" y="14" width="1" height="1" fill="#000"/><rect x="627" y="15" width="1" height="1" fill="#000"/><rect x="634" y="14" width="2" height="2" fill="#141a28"/><rect x="633" y="13" width="2" height="2" fill="#b4bcd2"/><rect x="634" y="14" width="1" height="1" fill="#000"/><rect x="635" y="15" width="1" height="1" fill="#000"/><rect x="642" y="14" width="2" height="2" fill="#141a28"/><rect x="641" y="13" width="2" height="2" fill="#b4bcd2"/><rect x="642" y="14" width="1" height="1" fill="#000"/><rect x="643" y="15" width="1" height="1" fill="#000"/><rect x="650" y="14" width="2" height="2" fill="#141a28"/><rect x="649" y="13" width="2" height="2" fill="#b4bcd2"/><rect x="650" y="14" width="1" height="1" fill="#000"/><rect x="651" y="15" width="1" height="1" fill="#000"/><rect x="658" y="14" width="2" height="2" fill="#141a28"/><rect x="657" y="13" width="2" height="2" fill="#b4bcd2"/><rect x="658" y="14" width="1" height="1" fill="#000"/><rect x="659" y="15" width="1" height="1" fill="#000"/><rect x="666" y="14" width="2" height="2" fill="#141a28"/><rect x="665" y="13" width="2" height="2" fill="#b4bcd2"/><rect x="666" y="14" width="1" height="1" fill="#000"/><rect x="667" y="15" width="1" height="1" fill="#000"/><rect x="674" y="14" width="2" height="2" fill="#141a28"/><rect x="673" y="13" width="2" height="2" fill="#b4bcd2"/><rect x="674" y="14" width="1" height="1" fill="#000"/><rect x="675" y="15" width="1" height="1" fill="#000"/><rect x="682" y="14" width="2" height="2" fill="#141a28"/><rect x="681" y="13" width="2" height="2" fill="#b4bcd2"/><rect x="682" y="14" width="1" height="1" fill="#000"/><rect x="683" y="15" width="1" height="1" fill="#000"/><rect x="690" y="14" width="2" height="2" fill="#141a28"/><rect x="689" y="13" width="2" height="2" fill="#b4bcd2"/><rect x="690" y="14" width="1" height="1" fill="#000"/><rect x="691" y="15" width="1" height="1" fill="#000"/><rect x="698" y="14" width="2" height="2" fill="#141a28"/><rect x="697" y="13" width="2" height="2" fill="#b4bcd2"/><rect x="698" y="14" width="1" height="1" fill="#000"/><rect x="699" y="15" width="1" height="1" fill="#000"/><rect x="706" y="14" width="2" height="2" fill="#141a28"/><rect x="705" y="13" width="2" height="2" fill="#b4bcd2"/><rect x="706" y="14" width="1" height="1" fill="#000"/><rect x="707" y="15" width="1" height="1" fill="#000"/><rect x="714" y="14" width="2" height="2" fill="#141a28"/><rect x="713" y="13" width="2" height="2" fill="#b4bcd2"/><rect x="714" y="14" width="1" height="1" fill="#000"/><rect x="715" y="15" width="1" height="1" fill="#000"/><rect x="722" y="14" width="2" height="2" fill="#141a28"/><rect x="721" y="13" width="2" height="2" fill="#b4bcd2"/><rect x="722" y="14" width="1" height="1" fill="#000"/><rect x="723" y="15" width="1" height="1" fill="#000"/><rect x="730" y="14" width="2" height="2" fill="#141a28"/><rect x="729" y="13" width="2" height="2" fill="#b4bcd2"/><rect x="730" y="14" width="1" height="1" fill="#000"/><rect x="731" y="15" width="1" height="1" fill="#000"/><rect x="738" y="14" width="2" height="2" fill="#141a28"/><rect x="737" y="13" width="2" height="2" fill="#b4bcd2"/><rect x="738" y="14" width="1" height="1" fill="#000"/><rect x="739" y="15" width="1" height="1" fill="#000"/><rect x="746" y="14" width="2" height="2" fill="#141a28"/><rect x="745" y="13" width="2" height="2" fill="#b4bcd2"/><rect x="746" y="14" width="1" height="1" fill="#000"/><rect x="747" y="15" width="1" height="1" fill="#000"/><rect x="754" y="14" width="2" height="2" fill="#141a28"/><rect x="753" y="13" width="2" height="2" fill="#b4bcd2"/><rect x="754" y="14" width="1" height="1" fill="#000"/><rect x="755" y="15" width="1" height="1" fill="#000"/><rect x="762" y="14" width="2" height="2" fill="#141a28"/><rect x="761" y="13" width="2" height="2" fill="#b4bcd2"/><rect x="762" y="14" width="1" height="1" fill="#000"/><rect x="763" y="15" width="1" height="1" fill="#000"/><rect x="770" y="14" width="2" height="2" fill="#141a28"/><rect x="769" y="13" width="2" height="2" fill="#b4bcd2"/><rect x="770" y="14" width="1" height="1" fill="#000"/><rect x="771" y="15" width="1" height="1" fill="#000"/><rect x="778" y="14" width="2" height="2" fill="#141a28"/><rect x="777" y="13" width="2" height="2" fill="#b4bcd2"/><rect x="778" y="14" width="1" height="1" fill="#000"/><rect x="779" y="15" width="1" height="1" fill="#000"/><rect x="786" y="14" width="2" height="2" fill="#141a28"/><rect x="785" y="13" width="2" height="2" fill="#b4bcd2"/><rect x="786" y="14" width="1" height="1" fill="#000"/><rect x="787" y="15" width="1" height="1" fill="#000"/><rect x="794" y="0" width="2" height="1" fill="#e8ecf4"/><rect x="795" y="1" width="1" height="1" fill="#c8d0dc"/></svg>
<svg style="position:absolute;left:0;top:0" width="20" height="20">
<rect x="0" y="0" width="1" height="1" fill="#e8d8e8"/>
<path d="M5 2 L10 1 L14 2 L13 5 L9 6 L6 5 Z" fill="#1c2ca8"/>
<path d="M6 2 L8 2 L9 4 L7 5 L6 4 Z" fill="#b8b8f0"/>
<path d="M2 4 L5 3 L6 5 L5 9 L3 9 L2 7 Z" fill="#80c0a0"/>
<rect x="5" y="6" width="13" height="12" fill="#000" shape-rendering="crispEdges"/>
<rect x="6" y="7" width="11" height="10" fill="#f6f2ee" shape-rendering="crispEdges"/>
<rect x="13" y="8" width="3" height="2" fill="#2030a8" shape-rendering="crispEdges"/>
<rect x="12" y="11" width="4" height="1" fill="#d05030" shape-rendering="crispEdges"/>
<rect x="11" y="13" width="5" height="1" fill="#c83040" shape-rendering="crispEdges"/>
<rect x="13" y="15" width="4" height="2" fill="#1818a0" shape-rendering="crispEdges"/>
<path d="M10 7.5 L12 7.5 L9 11 L11.5 11 L7 16.5 L8.5 12.5 L6.5 12.5 Z" fill="#f4ec30" stroke="#000" stroke-width="0.6"/>
</svg>
<div class="t" style="left:20px;top:3.84px;font-size:12px;color:#fff;">ierapp : v02.0.0.0 {FPMM-23} Store Item Definitions</div>
<div style="position:absolute;left:3px;top:21px;width:254px;height:25px;background:#d3d3d3;border-top-left-radius:2px;border-top:1px solid #e4e4e4"></div>
<div style="position:absolute;left:257px;top:22px;width:1px;height:20px;background:#6c7080"></div>
<div class="t" style="left:10px;top:26.0px;font-size:13px;color:#000;"><span class="s" style="transform-origin:0 0">Study Guide - Package Item Components</span></div>
<div style="position:absolute;left:257px;top:44px;width:535px;height:2px;background:#c8c8c8"></div>
<div style="position:absolute;left:3px;top:45px;width:2px;height:453px;background:#c4c4c8"></div>
<div style="position:absolute;left:3px;top:497px;width:789px;height:2px;background:#c8cac8"></div>
<div style="position:absolute;left:792px;top:45px;width:2px;height:454px;background:#d0d2da"></div>
<div style="position:absolute;left:794px;top:45px;width:1px;height:454px;background:#606478"></div>
<svg style="position:absolute;left:0;top:0" width="796" height="499">
<path d="M16.5 62.5 H775.5 L778.5 65.5 V171.5 L774.5 175.5 H17.5 L13.5 171.5 V65.5 Z" fill="none" stroke="#969aa4" stroke-width="1"/>
<path d="M16.5 187.5 H774.5 L777.5 190.5 V479.5 L773.5 483.5 H17.5 L13.5 479.5 V190.5 Z" fill="none" stroke="#969aa4" stroke-width="1"/>
</svg>
<div class="t" style="right:700px;top:83.0px;font-size:13px;color:#000;text-align:right;"><span class="s" style="transform-origin:100% 0">Student</span></div>
<div class="f" style="left:100px;top:77px;width:93px;height:20px"><div class="t" style="left:2px;top:1px"><span class="s" style="transform-origin:0 0">201100090</span></div></div>
<div class="f" style="left:197px;top:77px;width:320px;height:20px"><div class="t" style="left:2px;top:1px"><span class="s" style="transform-origin:0 0">MR B Black</span></div></div>
<div class="t" style="left:115.5px;top:101.0px;font-size:13px;color:#000;"><span class="s" style="transform-origin:0 0">Qualification</span></div>
<div class="t" style="left:211px;top:101.0px;font-size:13px;color:#000;"><span class="s" style="transform-origin:0 0">Subject</span></div>
<div class="t" style="left:334px;top:101.0px;font-size:13px;color:#000;"><span class="s" style="transform-origin:0 0">Year</span></div>
<div class="t" style="left:400px;top:101.0px;font-size:13px;color:#000;"><span class="s" style="transform-origin:0 0">Block</span></div>
<div class="t" style="left:441px;top:101.0px;font-size:13px;color:#000;"><span class="s" style="transform-origin:0 0">Study Period</span></div>
<div class="t" style="left:523px;top:101.0px;font-size:13px;color:#000;"><span class="s" style="transform-origin:0 0">Student Type</span></div>
<div class="f" style="left:100px;top:119px;width:100px;height:20px"><div class="t" style="left:2px;top:1px"><span class="s" style="transform-origin:0 0">100A-1</span></div></div>
<div class="f" style="left:209px;top:119px;width:113px;height:20px"><div class="t" style="left:2px;top:1px"><span class="s" style="transform-origin:0 0">1000000</span></div></div>
<div class="f" style="left:332px;top:119px;width:60px;height:20px"><div class="t" style="left:2px;top:1px"><span class="s" style="transform-origin:0 0">2011</span></div></div>
<div class="f" style="left:401px;top:119px;width:27px;height:20px"><div class="t" style="left:2px;top:1px"><span class="s" style="transform-origin:0 0">0</span></div></div>
<div class="f" style="left:464px;top:119px;width:26px;height:20px"></div>
<div class="f" style="left:540px;top:119px;width:40px;height:20px"><div class="t" style="left:2px;top:1px"><span class="s" style="transform-origin:0 0">N</span></div></div>
<div class="t" style="left:17px;top:156.0px;font-size:13px;color:#000;"><span class="s" style="transform-origin:0 0">Package Item</span></div>
<div class="f" style="left:100px;top:150px;width:93px;height:20px"><div class="t" style="left:2px;top:1px"><span class="s" style="transform-origin:0 0">400113</span></div></div>
<div class="f" style="left:197px;top:150px;width:247px;height:20px"><div class="t" style="left:2px;top:1px"><span class="s" style="transform-origin:0 0">Science 101</span></div></div>
<div class="t" style="left:448px;top:156.0px;font-size:13px;color:#000;"><span class="s" style="transform-origin:0 0">Store Code</span></div>
<div class="f" style="left:516px;top:150px;width:40px;height:20px"><div class="t" style="left:2px;top:1px"><span class="s" style="transform-origin:0 0">6B</span></div></div>
<div class="t" style="left:565px;top:156.0px;font-size:13px;color:#000;"><span class="s" style="transform-origin:0 0">Available Unpacked</span></div>
<div class="f" style="left:681px;top:150px;width:80px;height:20px"><div class="t" style="right:2px;top:1px"><span class="s" style="transform-origin:100% 0">13</span></div></div>
<div class="t" style="left:21px;top:243.0px;font-size:13px;color:#000;"><span class="s" style="transform-origin:0 0">Item</span></div>
<div class="t" style="left:114px;top:243.0px;font-size:13px;color:#000;"><span class="s" style="transform-origin:0 0">Description</span></div>
<div class="t" style="left:349px;top:223.0px;font-size:13px;color:#000;"><span class="s" style="transform-origin:0 0">Commodity</span></div>
<div class="t" style="left:349px;top:243.0px;font-size:13px;color:#000;"><span class="s" style="transform-origin:0 0">Code</span></div>
<div class="t" style="left:423px;top:203.0px;font-size:13px;color:#000;"><span class="s" style="transform-origin:0 0">L</span></div>
<div class="t" style="left:423px;top:223.0px;font-size:13px;color:#000;"><span class="s" style="transform-origin:0 0">n</span></div>
<div class="t" style="left:423px;top:243.0px;font-size:13px;color:#000;"><span class="s" style="transform-origin:0 0">g</span></div>
<div class="t" style="left:443px;top:203.0px;font-size:13px;color:#000;"><span class="s" style="transform-origin:0 0">I</span></div>
<div class="t" style="left:443px;top:223.0px;font-size:13px;color:#000;"><span class="s" style="transform-origin:0 0">n</span></div>
<div class="t" style="left:443px;top:243.0px;font-size:13px;color:#000;"><span class="s" style="transform-origin:0 0">d</span></div>
<div class="t" style="left:463px;top:243.0px;font-size:13px;color:#000;"><span class="s" style="transform-origin:0 0">In Stock</span></div>
<div class="t" style="left:543px;top:243.0px;font-size:13px;color:#000;"><span class="s" style="transform-origin:0 0">Available</span></div>
<div class="t" style="left:623px;top:243.0px;font-size:13px;color:#000;"><span class="s" style="transform-origin:0 0">On Order</span></div>
<div class="t" style="left:703px;top:203.0px;font-size:13px;color:#000;"><span class="s" style="transform-origin:0 0">A</span></div>
<div class="t" style="left:703px;top:223.0px;font-size:13px;color:#000;"><span class="s" style="transform-origin:0 0">S</span></div>
<div class="t" style="left:703px;top:243.0px;font-size:13px;color:#000;"><span class="s" style="transform-origin:0 0">M</span></div>
<div class="c cur" style="left:20px;top:261px;width:93px"><div style="position:absolute;left:2px;top:1px;width:43px;height:15px;background:#0000c8"></div><div class="t" style="left:2px;top:1px"><span class="s" style="transform-origin:0 0"><span style="color:#fff">400057</span></span></div></div>
<div class="c cur" style="left:113px;top:261px;width:235px"><div class="t" style="left:2px;top:1px"><span class="s" style="transform-origin:0 0">Science 101</span></div></div>
<div class="c cur" style="left:348px;top:261px;width:74px"><div class="t" style="left:2px;top:1px"><span class="s" style="transform-origin:0 0">GUID</span></div></div>
<div class="c cur" style="left:422px;top:261px;width:20px"><div class="t" style="left:2px;top:1px"><span class="s" style="transform-origin:0 0">E</span></div></div>
<div class="c cur" style="left:442px;top:261px;width:20px"><div class="t" style="left:2px;top:1px"><span class="s" style="transform-origin:0 0">M</span></div></div>
<div class="c cur" style="left:462px;top:261px;width:80px"><div class="t" style="right:2px;top:1px;text-align:right"><span class="s" style="transform-origin:100% 0">1000.00</span></div></div>
<div class="c cur" style="left:542px;top:261px;width:80px"><div class="t" style="right:2px;top:1px;text-align:right"><span class="s" style="transform-origin:100% 0">990.00</span></div></div>
<div class="c cur" style="left:622px;top:261px;width:80px"><div class="t" style="right:2px;top:1px;text-align:right"><span class="s" style="transform-origin:100% 0">100.00</span></div></div>
<div class="c cur" style="left:702px;top:261px;width:19px"><div class="t" style="left:2px;top:1px"><span class="s" style="transform-origin:0 0">N</span></div></div>
<div class="c" style="left:20px;top:281px;width:93px"><div class="t" style="left:2px;top:1px"><span class="s" style="transform-origin:0 0">400058</span></div></div>
<div class="c" style="left:113px;top:281px;width:235px"><div class="t" style="left:2px;top:1px"><span class="s" style="transform-origin:0 0">Science 101 - Basic Compounds 123</span></div></div>
<div class="c" style="left:348px;top:281px;width:74px"><div class="t" style="left:2px;top:1px"><span class="s" style="transform-origin:0 0">GUID</span></div></div>
<div class="c" style="left:422px;top:281px;width:20px"><div class="t" style="left:2px;top:1px"><span class="s" style="transform-origin:0 0">E</span></div></div>
<div class="c" style="left:442px;top:281px;width:20px"><div class="t" style="left:2px;top:1px"><span class="s" style="transform-origin:0 0">M</span></div></div>
<div class="c" style="left:462px;top:281px;width:80px"><div class="t" style="right:2px;top:1px;text-align:right"><span class="s" style="transform-origin:100% 0">1000.00</span></div></div>
<div class="c" style="left:542px;top:281px;width:80px"><div class="t" style="right:2px;top:1px;text-align:right"><span class="s" style="transform-origin:100% 0">990.00</span></div></div>
<div class="c" style="left:622px;top:281px;width:80px"><div class="t" style="right:2px;top:1px;text-align:right"><span class="s" style="transform-origin:100% 0">100.00</span></div></div>
<div class="c" style="left:702px;top:281px;width:19px"><div class="t" style="left:2px;top:1px"><span class="s" style="transform-origin:0 0">N</span></div></div>
<div class="c" style="left:20px;top:301px;width:93px"><div class="t" style="left:2px;top:1px"><span class="s" style="transform-origin:0 0">400059</span></div></div>
<div class="c" style="left:113px;top:301px;width:235px"><div class="t" style="left:2px;top:1px"><span class="s" style="transform-origin:0 0">Science 102 - Measuring Matter and Other</span></div></div>
<div class="c" style="left:348px;top:301px;width:74px"><div class="t" style="left:2px;top:1px"><span class="s" style="transform-origin:0 0">GUID</span></div></div>
<div class="c" style="left:422px;top:301px;width:20px"><div class="t" style="left:2px;top:1px"><span class="s" style="transform-origin:0 0">A</span></div></div>
<div class="c" style="left:442px;top:301px;width:20px"><div class="t" style="left:2px;top:1px"><span class="s" style="transform-origin:0 0">M</span></div></div>
<div class="c" style="left:462px;top:301px;width:80px"><div class="t" style="right:2px;top:1px;text-align:right"><span class="s" style="transform-origin:100% 0">1000.00</span></div></div>
<div class="c" style="left:542px;top:301px;width:80px"><div class="t" style="right:2px;top:1px;text-align:right"><span class="s" style="transform-origin:100% 0">990.00</span></div></div>
<div class="c" style="left:622px;top:301px;width:80px"><div class="t" style="right:2px;top:1px;text-align:right"><span class="s" style="transform-origin:100% 0">100.00</span></div></div>
<div class="c" style="left:702px;top:301px;width:19px"><div class="t" style="left:2px;top:1px"><span class="s" style="transform-origin:0 0">N</span></div></div>
<div class="c" style="left:20px;top:321px;width:93px"><div class="t" style="left:2px;top:1px"><span class="s" style="transform-origin:0 0">400061</span></div></div>
<div class="c" style="left:113px;top:321px;width:235px"><div class="t" style="left:2px;top:1px"><span class="s" style="transform-origin:0 0">Science 101</span></div></div>
<div class="c" style="left:348px;top:321px;width:74px"><div class="t" style="left:2px;top:1px"><span class="s" style="transform-origin:0 0">GUID</span></div></div>
<div class="c" style="left:422px;top:321px;width:20px"></div>
<div class="c" style="left:442px;top:321px;width:20px"><div class="t" style="left:2px;top:1px"><span class="s" style="transform-origin:0 0">M</span></div></div>
<div class="c" style="left:462px;top:321px;width:80px"><div class="t" style="right:2px;top:1px;text-align:right"><span class="s" style="transform-origin:100% 0">80.00</span></div></div>
<div class="c" style="left:542px;top:321px;width:80px"><div class="t" style="right:2px;top:1px;text-align:right"><span class="s" style="transform-origin:100% 0">69.00</span></div></div>
<div class="c" style="left:622px;top:321px;width:80px"><div class="t" style="right:2px;top:1px;text-align:right"><span class="s" style="transform-origin:100% 0">260.00</span></div></div>
<div class="c" style="left:702px;top:321px;width:19px"><div class="t" style="left:2px;top:1px"><span class="s" style="transform-origin:0 0">N</span></div></div>
<div class="c" style="left:20px;top:341px;width:93px"><div class="t" style="left:2px;top:1px"><span class="s" style="transform-origin:0 0">400062</span></div></div>
<div class="c" style="left:113px;top:341px;width:235px"><div class="t" style="left:2px;top:1px"><span class="s" style="transform-origin:0 0">Science 101</span></div></div>
<div class="c" style="left:348px;top:341px;width:74px"><div class="t" style="left:2px;top:1px"><span class="s" style="transform-origin:0 0">GUID</span></div></div>
<div class="c" style="left:422px;top:341px;width:20px"><div class="t" style="left:2px;top:1px"><span class="s" style="transform-origin:0 0">E</span></div></div>
<div class="c" style="left:442px;top:341px;width:20px"><div class="t" style="left:2px;top:1px"><span class="s" style="transform-origin:0 0">M</span></div></div>
<div class="c" style="left:462px;top:341px;width:80px"><div class="t" style="right:2px;top:1px;text-align:right"><span class="s" style="transform-origin:100% 0">1000.00</span></div></div>
<div class="c" style="left:542px;top:341px;width:80px"><div class="t" style="right:2px;top:1px;text-align:right"><span class="s" style="transform-origin:100% 0">990.00</span></div></div>
<div class="c" style="left:622px;top:341px;width:80px"><div class="t" style="right:2px;top:1px;text-align:right"><span class="s" style="transform-origin:100% 0">100.00</span></div></div>
<div class="c" style="left:702px;top:341px;width:19px"><div class="t" style="left:2px;top:1px"><span class="s" style="transform-origin:0 0">A</span></div></div>
<div class="c" style="left:20px;top:361px;width:93px"><div class="t" style="left:2px;top:1px"><span class="s" style="transform-origin:0 0">400063</span></div></div>
<div class="c" style="left:113px;top:361px;width:235px"><div class="t" style="left:2px;top:1px"><span class="s" style="transform-origin:0 0">Science 101</span></div></div>
<div class="c" style="left:348px;top:361px;width:74px"><div class="t" style="left:2px;top:1px"><span class="s" style="transform-origin:0 0">GUID</span></div></div>
<div class="c" style="left:422px;top:361px;width:20px"><div class="t" style="left:2px;top:1px"><span class="s" style="transform-origin:0 0">E</span></div></div>
<div class="c" style="left:442px;top:361px;width:20px"><div class="t" style="left:2px;top:1px"><span class="s" style="transform-origin:0 0">M</span></div></div>
<div class="c" style="left:462px;top:361px;width:80px"><div class="t" style="right:2px;top:1px;text-align:right"><span class="s" style="transform-origin:100% 0">1000.00</span></div></div>
<div class="c" style="left:542px;top:361px;width:80px"><div class="t" style="right:2px;top:1px;text-align:right"><span class="s" style="transform-origin:100% 0">990.00</span></div></div>
<div class="c" style="left:622px;top:361px;width:80px"><div class="t" style="right:2px;top:1px;text-align:right"><span class="s" style="transform-origin:100% 0">100.00</span></div></div>
<div class="c" style="left:702px;top:361px;width:19px"><div class="t" style="left:2px;top:1px"><span class="s" style="transform-origin:0 0">N</span></div></div>
<div class="c" style="left:20px;top:381px;width:93px"></div>
<div class="c" style="left:113px;top:381px;width:235px"></div>
<div class="c" style="left:348px;top:381px;width:74px"></div>
<div class="c" style="left:422px;top:381px;width:20px"></div>
<div class="c" style="left:442px;top:381px;width:20px"></div>
<div class="c" style="left:462px;top:381px;width:80px"></div>
<div class="c" style="left:542px;top:381px;width:80px"></div>
<div class="c" style="left:622px;top:381px;width:80px"></div>
<div class="c" style="left:702px;top:381px;width:19px"></div>
<div class="c" style="left:20px;top:401px;width:93px"></div>
<div class="c" style="left:113px;top:401px;width:235px"></div>
<div class="c" style="left:348px;top:401px;width:74px"></div>
<div class="c" style="left:422px;top:401px;width:20px"></div>
<div class="c" style="left:442px;top:401px;width:20px"></div>
<div class="c" style="left:462px;top:401px;width:80px"></div>
<div class="c" style="left:542px;top:401px;width:80px"></div>
<div class="c" style="left:622px;top:401px;width:80px"></div>
<div class="c" style="left:702px;top:401px;width:19px"></div>
<div class="c" style="left:20px;top:421px;width:93px"></div>
<div class="c" style="left:113px;top:421px;width:235px"></div>
<div class="c" style="left:348px;top:421px;width:74px"></div>
<div class="c" style="left:422px;top:421px;width:20px"></div>
<div class="c" style="left:442px;top:421px;width:20px"></div>
<div class="c" style="left:462px;top:421px;width:80px"></div>
<div class="c" style="left:542px;top:421px;width:80px"></div>
<div class="c" style="left:622px;top:421px;width:80px"></div>
<div class="c" style="left:702px;top:421px;width:19px"></div>
<div class="c" style="left:20px;top:441px;width:93px"></div>
<div class="c" style="left:113px;top:441px;width:235px"></div>
<div class="c" style="left:348px;top:441px;width:74px"></div>
<div class="c" style="left:422px;top:441px;width:20px"></div>
<div class="c" style="left:442px;top:441px;width:20px"></div>
<div class="c" style="left:462px;top:441px;width:80px"></div>
<div class="c" style="left:542px;top:441px;width:80px"></div>
<div class="c" style="left:622px;top:441px;width:80px"></div>
<div class="c" style="left:702px;top:441px;width:19px"></div>
</body></html>
